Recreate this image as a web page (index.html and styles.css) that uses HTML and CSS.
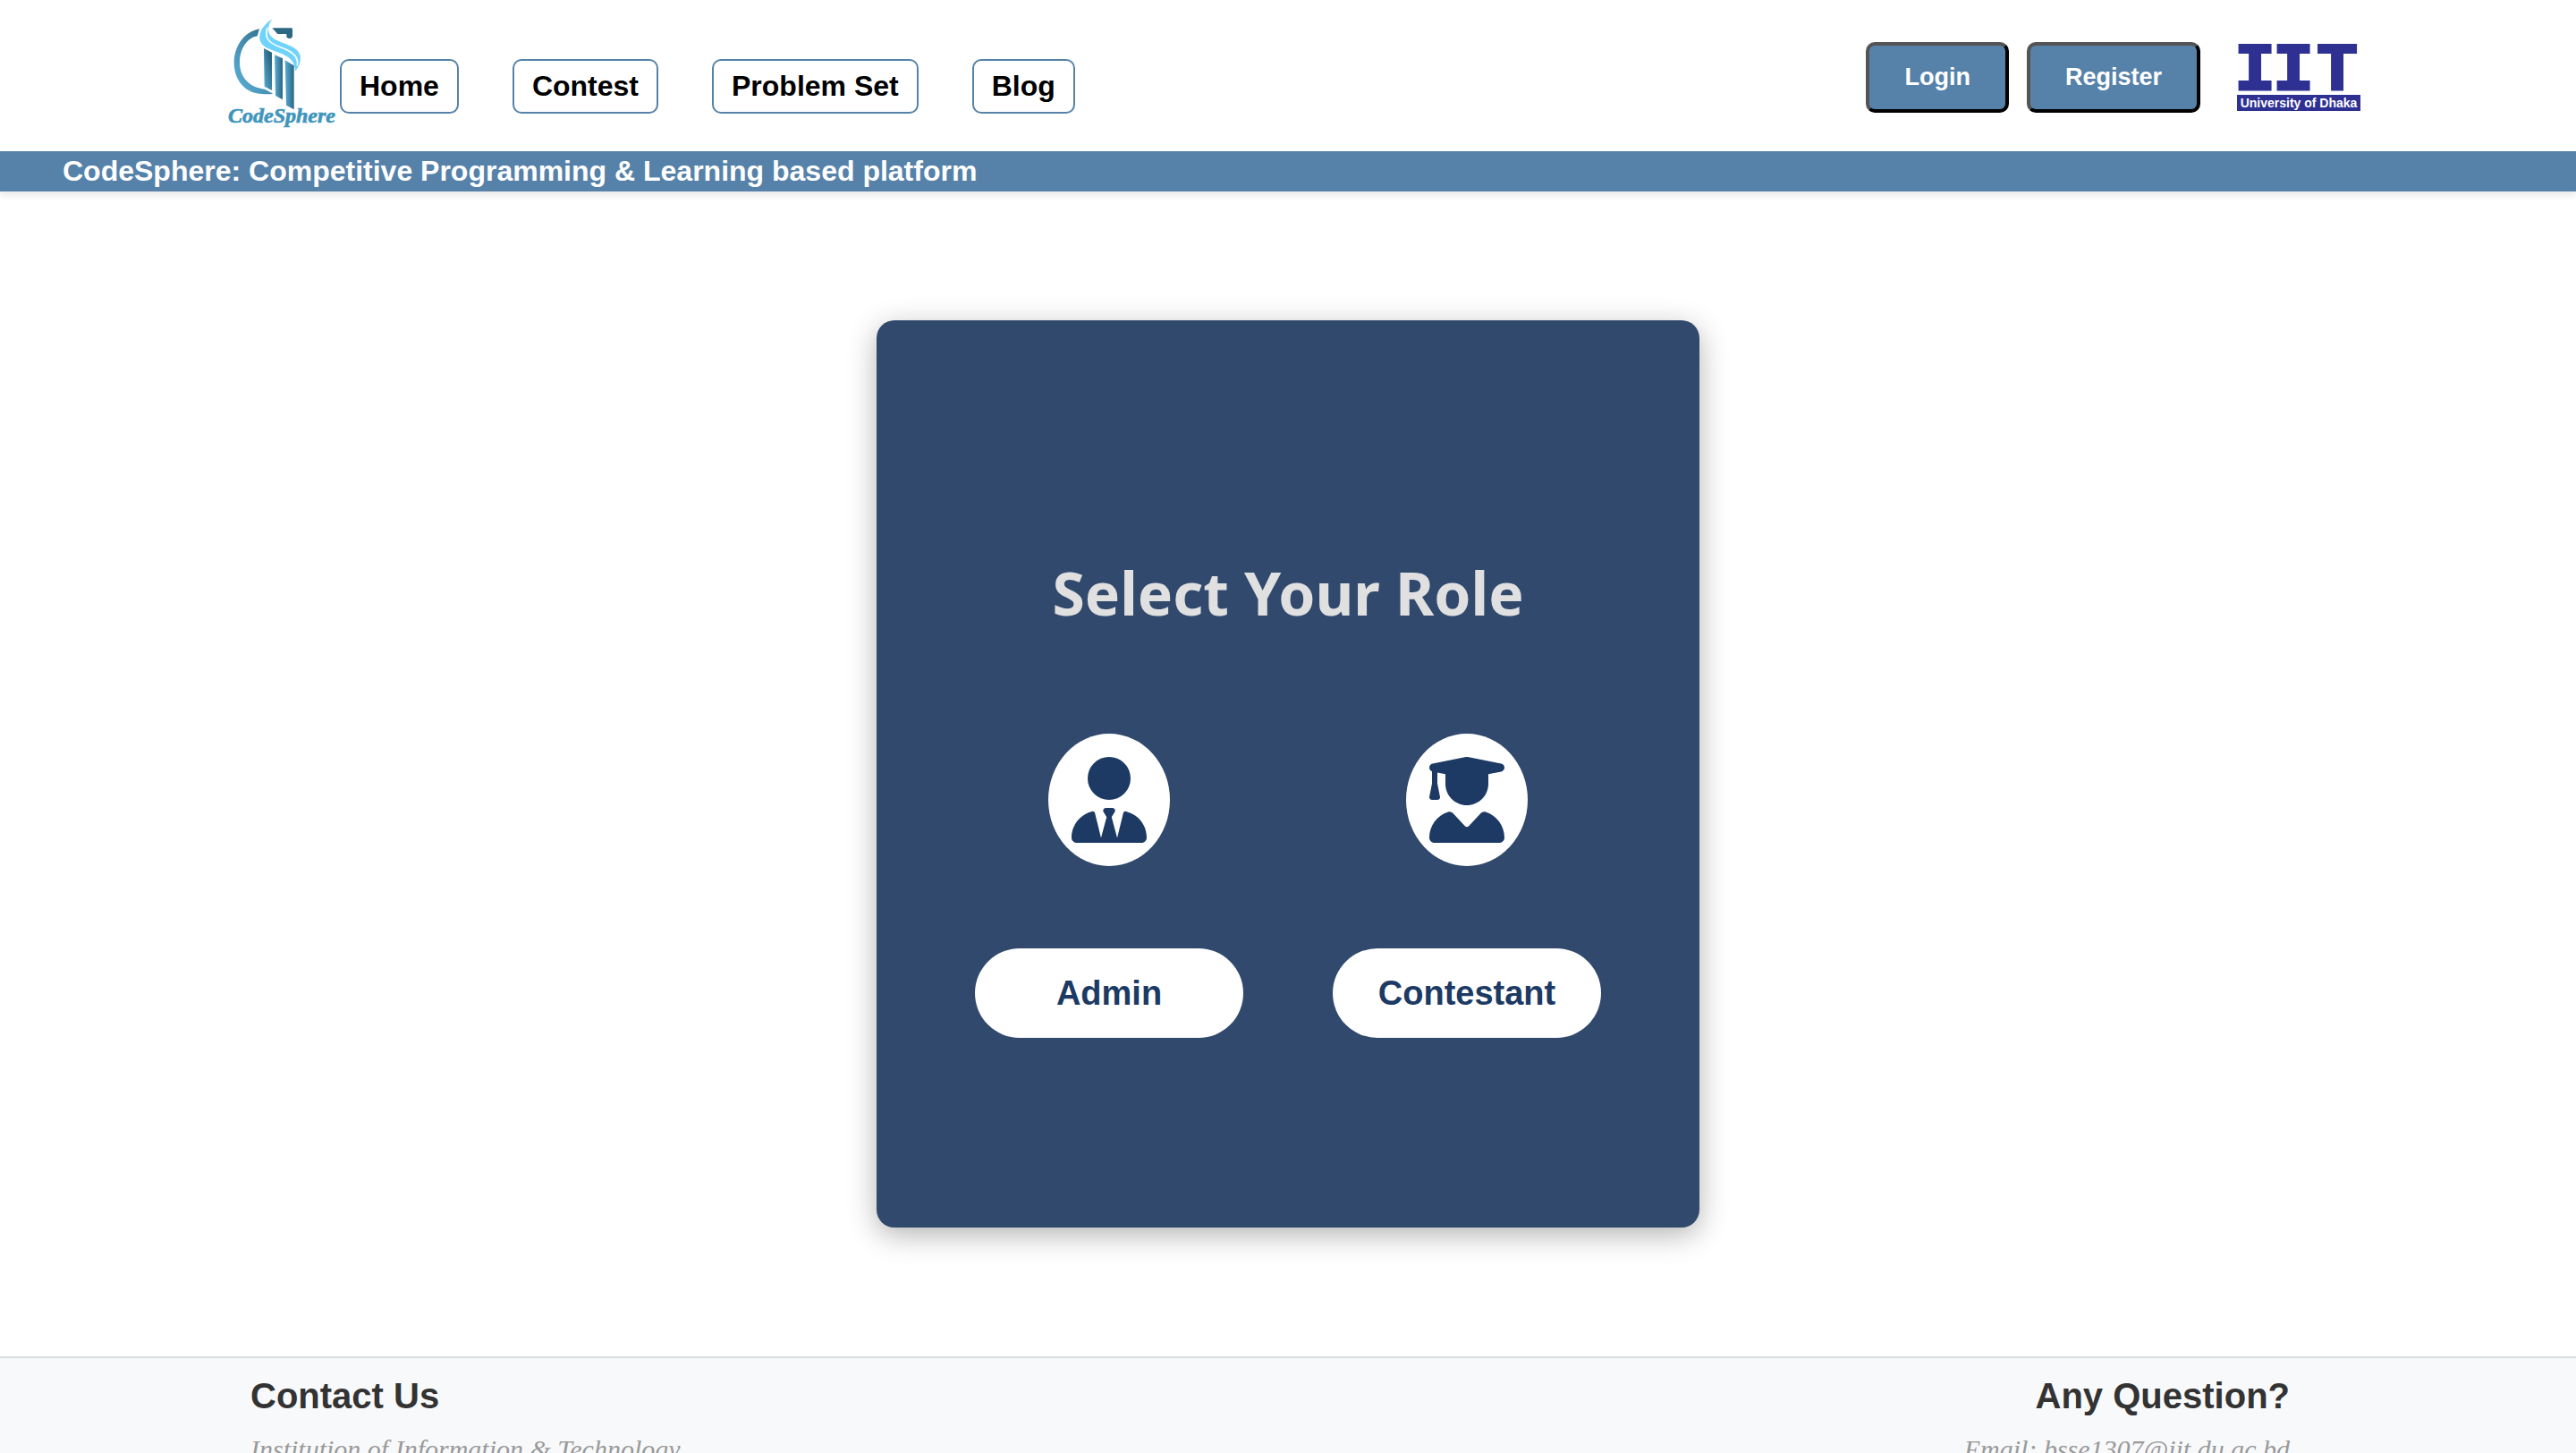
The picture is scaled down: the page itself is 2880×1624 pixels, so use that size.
FILE: index.html
```html
<!DOCTYPE html>
<html lang="en">
<head>
<meta charset="utf-8">
<meta name="viewport" content="width=device-width, initial-scale=1">
<title>CodeSphere</title>
<link rel="stylesheet" href="styles.css">
</head>
<body>
<header class="site-header">
  <div class="topbar">
    <a class="brand" href="#" aria-label="CodeSphere">
      <svg class="brand-logo" viewBox="30 0 390 435">
        <defs>
          <linearGradient id="ring" x1="1" y1="0" x2="0" y2="1">
            <stop offset="0" stop-color="#2c6784"/>
            <stop offset="1" stop-color="#5db4dc"/>
          </linearGradient>
          <linearGradient id="bar" x1="0" y1="0" x2="1" y2="0">
            <stop offset="0" stop-color="#56aed6"/>
            <stop offset="1" stop-color="#2b6580"/>
          </linearGradient>
          <linearGradient id="barEdge" x1="1" y1="0" x2="0" y2="1">
            <stop offset="0.2" stop-color="#2b6580"/>
            <stop offset="1" stop-color="#58b0d8"/>
          </linearGradient>
        </defs>
        <path fill="url(#ring)" d="M150 67C100 75 65 125 65 181C65 243 107 285 160 285C174 286 186 286 196 284L168 269C118 264 84 230 84 180C84 133 110 96 143 91Z"/>
        <path fill="#2c6784" d="M193 64H257Q261 64 261 68V90Q261 99 251 99Q241 99 241 91V84H211Z"/>
        <path fill="url(#barEdge)" d="M165 132L192 146V273L167 260Z"/>
        <path fill="url(#bar)" d="M201 154L228 166V304L204 291Z"/>
        <path fill="url(#bar)" d="M236 172L266 190V337L240 323Z"/>
        <path fill="#6fd3fb" d="M195 33C165 50 148 78 151 101C158 140 218 138 248 163C264 175 269 190 270 208C283 196 290 176 287 157C277 111 192 119 181 77C178 60 185 43 195 33Z"/>
        <path class="brand-ribbon" d="M177 62C158 119 218 123 249 141C272 153 281 168 277 190"/>
        <text class="brand-name" x="45" y="382">CodeSphere</text>
      </svg>
    </a>
    <nav class="main-nav" aria-label="Main">
      <a class="nav-link" href="#">Home</a>
      <a class="nav-link" href="#">Contest</a>
      <a class="nav-link" href="#">Problem Set</a>
      <a class="nav-link" href="#">Blog</a>
    </nav>
    <div class="account">
      <button class="account-button" type="button">Login</button>
      <button class="account-button" type="button">Register</button>
      <a class="institute" href="#" aria-label="IIT, University of Dhaka">
        <svg class="institute-logo" viewBox="0 0 138 76">
          <g class="institute-mark">
            <text x="20" y="51">I</text>
            <text x="63" y="51">I</text>
            <text x="112" y="51">T</text>
          </g>
          <rect class="institute-band" x="0" y="57" width="138" height="18"/>
          <text class="institute-name" x="69" y="71">University of Dhaka</text>
        </svg>
      </a>
    </div>
  </div>
  <div class="tagline">CodeSphere: Competitive Programming &amp; Learning based platform</div>
</header>

<main class="page">
  <section class="role-card">
    <h1 class="role-title">Select Your Role</h1>
    <div class="roles">
      <div class="role">
        <span class="role-icon">
          <svg viewBox="0 0 448 512" aria-hidden="true"><path d="M96 128a128 128 0 1 0 256 0A128 128 0 1 0 96 128zm94.5 200.2l18.6 31L175.8 483.1l-36-146.9c-2-8.1-9.8-13.4-17.9-11.3C51.9 342.4 0 405.8 0 481.3c0 17 13.8 30.7 30.7 30.7l131.7 0c0 0 0 0 .1 0l5.5 0 112 0 5.5 0c0 0 0 0 .1 0l131.7 0c17 0 30.7-13.8 30.7-30.7c0-75.5-51.9-138.9-121.9-156.4c-8.1-2-15.9 3.3-17.9 11.3l-36 146.9L238.9 359.2l18.6-31c6.4-10.7-1.3-24.2-13.7-24.2L224 304l-19.7 0c-12.4 0-20.1 13.6-13.7 24.2z"/></svg>
        </span>
        <button class="role-button" type="button">Admin</button>
      </div>
      <div class="role">
        <span class="role-icon">
          <svg viewBox="0 0 448 512" aria-hidden="true"><path d="M219.3 .5c3.1-.6 6.3-.6 9.4 0l200 40C439.9 42.7 448 52.6 448 64s-8.1 21.3-19.3 23.5L352 102.9l0 57.1c0 70.7-57.3 128-128 128s-128-57.3-128-128l0-57.1L48 93.3l0 65.1 15.7 78.4c.9 4.7-.3 9.6-3.3 13.3s-7.6 5.9-12.4 5.9l-32 0c-4.8 0-9.3-2.1-12.4-5.9s-4.3-8.6-3.3-13.3L16 158.4l0-71.8C6.5 83.3 0 74.3 0 64C0 52.6 8.1 42.7 19.3 40.5l200-40zM111.9 327.7c10.5-3.4 21.8 .4 29.4 8.5l71 75.5c6.3 6.7 17 6.7 23.3 0l71-75.5c7.6-8.1 18.9-11.9 29.4-8.5C401 348.6 448 409.4 448 481.3c0 17-13.8 30.7-30.7 30.7L30.7 512C13.8 512 0 498.2 0 481.3c0-71.9 47-132.7 111.9-153.6z"/></svg>
        </span>
        <button class="role-button" type="button">Contestant</button>
      </div>
    </div>
  </section>
</main>

<footer class="site-footer">
  <div class="footer-column">
    <h2 class="footer-title">Contact Us</h2>
    <p class="footer-text">Institution of Information &amp; Technology</p>
  </div>
  <div class="footer-column footer-column-end">
    <h2 class="footer-title">Any Question?</h2>
    <p class="footer-text">Email: bsse1307@iit.du.ac.bd</p>
  </div>
</footer>
</body>
</html>
```

FILE: styles.css
```css
* {
  box-sizing: border-box;
}

body {
  margin: 0;
  background: #fff;
  font-family: "Liberation Sans", Arial, sans-serif;
}

/* Header */
.site-header {
  box-shadow: 0 4px 8px rgba(0, 0, 0, 0.1);
}

.topbar {
  display: flex;
  align-items: flex-start;
  padding: 10px 241px 14px 250px;
}

.brand,
.institute {
  display: block;
}

.brand-logo {
  display: block;
  width: 130px;
  height: 145px;
}

.brand-ribbon {
  fill: none;
  stroke: #fff;
  stroke-width: 5;
}

.brand-name {
  fill: #4095bd;
  stroke: #4095bd;
  stroke-width: 2;
  font: italic 700 72px "Liberation Serif", "Times New Roman", serif;
}

.main-nav {
  display: flex;
  gap: 60px;
  padding-top: 56px;
}

.nav-link {
  padding: 10px 20px;
  border: 2px solid #5682aa;
  border-radius: 10px;
  color: #000;
  font-size: 32px;
  font-weight: 700;
  line-height: 37px;
  text-decoration: none;
  white-space: nowrap;
}

.account {
  display: flex;
  gap: 20px;
  margin-left: auto;
  padding-top: 37px;
}

.account-button {
  padding: 20px 39px;
  border: 4px outset #000;
  border-radius: 10px;
  background: #5682aa;
  color: #fff;
  font: 700 27px/31px "Liberation Sans", Arial, sans-serif;
}

.institute {
  padding: 2px 0 0 21px;
}

.institute-logo {
  display: block;
  width: 138px;
  height: 76px;
}

.institute-mark {
  fill: #2e3092;
  stroke: #2e3092;
  stroke-width: 3;
  font: 700 76px "Liberation Mono", "Courier New", monospace;
  text-anchor: middle;
}

.institute-band {
  fill: #2e3092;
}

.institute-name {
  fill: #fff;
  font: 700 14px "Liberation Sans", Arial, sans-serif;
  text-anchor: middle;
}

.tagline {
  padding: 4px 70px;
  background: #5682aa;
  color: #fff;
  font-size: 32px;
  font-weight: 700;
  line-height: 37px;
}

/* Role selection */
.page {
  display: flex;
  justify-content: center;
  padding: 144px 20px;
}

.role-card {
  width: 920px;
  max-width: 100%;
  padding: 264px 0 212px;
  border-radius: 20px;
  background: #31496d;
  box-shadow: 0 8px 32px rgba(0, 0, 0, 0.3);
}

.role-title {
  margin: 0 0 118px;
  color: #e0e0e0;
  font: 700 66px/80px "Noto Sans", "Open Sans", sans-serif;
  text-align: center;
}

.roles {
  display: flex;
  justify-content: center;
  gap: 100px;
}

.role {
  display: flex;
  flex-direction: column;
  align-items: center;
  gap: 92px;
}

.role-icon {
  padding: 26px;
  border-radius: 50%;
  background: #fff;
}

.role-icon svg {
  display: block;
  width: 84px;
  height: 96px;
  fill: #1c3a63;
}

.role-button {
  width: 300px;
  height: 100px;
  padding: 0;
  border: 0;
  border-radius: 50px;
  background: #fff;
  color: #1c3a63;
  font: 700 38px/44px "Liberation Sans", Arial, sans-serif;
}

/* Footer */
.site-footer {
  display: flex;
  justify-content: space-between;
  padding: 19px 320px 20px 280px;
  border-top: 2px solid #dadde0;
  background: #f8f9fb;
}

.footer-column-end {
  text-align: right;
}

.footer-title {
  margin: 0 0 20px;
  color: #333;
  font-size: 40px;
  line-height: 46px;
}

.footer-text {
  margin: 0;
  color: #999;
  font: italic 30px/34px "Liberation Serif", "Times New Roman", serif;
}
```
